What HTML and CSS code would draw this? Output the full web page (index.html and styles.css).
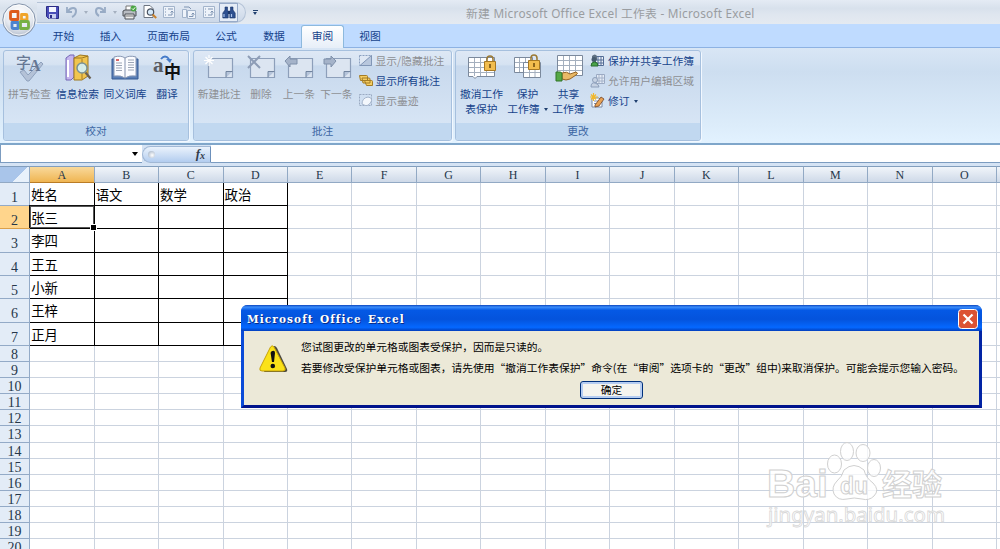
FILE: index.html
```html
<!DOCTYPE html>
<html lang="zh-CN">
<head>
<meta charset="utf-8">
<title>Microsoft Excel</title>
<link rel="stylesheet" href="styles.css">
</head>
<body>
<div class="app">
  <header class="titlebar">
    <div class="qat">
      <span class="slot w19"><svg width="13" height="13" viewBox="0 0 13 13"><path d="M.5.5h12v12h-10l-2-2z" fill="#4a4db8" stroke="#2b2c86"/><path d="M3 1h7v5H3z" fill="#f4f6ff"/><path d="M3 8h7v4.500H3z" fill="#c9cff0"/><path d="M4 9h2v3H4z" fill="#2b2c86"/></svg></span>
      <span class="slot w20"><svg width="12" height="12" viewBox="0 0 12 12"><path d="M1 1v5h5" fill="none" stroke="#98abc5" stroke-width="1.800"/><path d="M2 5C5 1 10 1 10 5c0 3-2 5-4 6" fill="none" stroke="#98abc5" stroke-width="2"/></svg></span>
      <span class="slot w7"><i class="caret pale"></i></span>
      <span class="slot w22"><svg width="12" height="12" viewBox="0 0 12 12"><path d="M11 1v5H6" fill="none" stroke="#98abc5" stroke-width="1.800"/><path d="M10 5C7 1 2 1 2 5c0 3 1 4 3 5" fill="none" stroke="#98abc5" stroke-width="2"/></svg></span>
      <span class="slot w7"><i class="caret pale"></i></span>
      <span class="slot w22"><svg width="15" height="15" viewBox="0 0 15 15"><path d="M4 1h7v5H4z" fill="#fff" stroke="#777"/><path d="M1 6l2-1h9l2 1v5H1z" fill="#b8bcc2" stroke="#4d5157"/><path d="M3 9h9v5H3z" fill="#eee" stroke="#4d5157"/><path d="M4 11h7" stroke="#777"/><circle cx="11.500" cy="3.500" r="3" fill="#49a544"/><path d="M10 3.500l1.200 1.200 2-2.400" stroke="#fff" fill="none"/></svg></span>
      <span class="slot w19"><svg width="14" height="14" viewBox="0 0 14 14"><path d="M1 .5h6l3 3v9H1z" fill="#fff" stroke="#6c7480"/><circle cx="7.500" cy="7" r="3.200" fill="#d4e8f8" stroke="#4a5260" stroke-width="1.200"/><path d="M9.700 9.500l3.500 3.500" stroke="#c9822c" stroke-width="2"/></svg></span>
      <span class="slot w20"><svg width="12" height="12" viewBox="0 0 12 12"><path d="M.5.500h11v11H.5z" fill="#eef3fa" stroke="#a3b4cb"/><path d="M2 3h1M5 3h5M2 6h1M2 9h1M5 9h4V5M7.500 6.500L9 5l1.500 1.500" stroke="#7f94b2" fill="none"/></svg></span>
      <span class="slot w20"><svg width="14" height="13" viewBox="0 0 14 13"><path d="M.5 3.500h4v8h-4zM5.500 4.500h8v8h-8z" fill="#eef3fa" stroke="#a3b4cb"/><path d="M2 1h5l2 2M7 10.500h4V7M9.500 8.500L11 7l1.500 1.500" stroke="#7f94b2" fill="none"/></svg></span>
      <span class="slot w20"><svg width="12" height="12" viewBox="0 0 12 12"><path d="M.5.500h11v11H.5z" fill="#eef3fa" stroke="#a3b4cb"/><path d="M2 3h1M5 3h5M2 6h1M2 9h1M5 9h4V5M7.500 6.500L9 5l1.500 1.500" stroke="#7f94b2" fill="none"/></svg></span>
      <span class="slot w19 active"><svg width="14" height="13" viewBox="0 0 14 13"><path d="M3 1h2.500v3l.7 1v7H.8V7L3 4zM8.500 1H11v3l2.200 3v5H7.800V5l.7-1z" fill="#2d4f8f" stroke="#1d3668" stroke-width=".6"/><path d="M6 5h2v3H6z" fill="#1d3668"/><path d="M2 8v3M9.500 8v3" stroke="#a9c3ec" stroke-width="1.200"/></svg></span>
    </div>
    <span class="customize"><i></i><i class="caret"></i></span>
    <h1>新建 Microsoft Office Excel 工作表 - Microsoft Excel</h1>
    <svg class="office" width="36" height="36" viewBox="0 0 36 36">
      <defs><radialGradient id="orb" cx=".5" cy=".3" r=".75"><stop offset="0" stop-color="#fff"/><stop offset=".6" stop-color="#e4e8ef"/><stop offset="1" stop-color="#a9b4c5"/></radialGradient></defs>
      <circle cx="18" cy="18" r="16.200" fill="url(#orb)" stroke="#8494ab"/>
      <circle cx="18" cy="18" r="15" fill="none" stroke="#fff" stroke-opacity=".8"/>
      <g fill="none" stroke-width="2.800" stroke-linejoin="round">
        <path d="M17 9.500h-6q-1.500 0-1.500 1.500v5q0 1.500 1.500 1.500h6z" stroke="#dd5a1c"/>
        <path d="M20.500 12.500h4.500q1 0 1 1v4.500h-5.500z" stroke="#f0a42a"/>
        <path d="M11 20.500h6v6h-5q-1 0-1-1z" stroke="#4c83cf"/>
        <path d="M19.500 19.500h7q1 0 1 1v5q0 1-1 1h-7z" stroke="#76b043"/>
      </g>
    </svg>
  </header>
  <nav class="tabs">
    <a>开始</a><a>插入</a><a>页面布局</a><a>公式</a><a>数据</a><a class="current">审阅</a><a>视图</a>
  </nav>
  <section class="ribbon">
    <div class="group g1">
      <div class="tools">
        <div class="big off"><svg width="30" height="28" viewBox="0 0 30 28"><path d="M5 18l4-2 4 5L26 8l2 2-14 17h-2z" fill="#b4c2d7" stroke="#8fa1bd"/><text x="1" y="14" class="zi">字</text><text x="14" y="17" class="la">A</text></svg><span>拼写检查</span></div>
        <div class="big"><svg width="30" height="28" viewBox="0 0 30 28"><path d="M3 4l4-3h4v22l-3 3H3z" fill="#c5b5ee" stroke="#7566b5"/><path d="M5 6v17" stroke="#fff" stroke-width="2"/><path d="M11 4l6-3 8 1v20l-6 4h-8z" fill="#f1c54f" stroke="#9e7820"/><path d="M19 5v20" stroke="#a67d22"/><path d="M11 4h8l6-2" fill="none" stroke="#9e7820"/><circle cx="19" cy="14" r="5" fill="#d4f1f4" fill-opacity=".93" stroke="#7b9295" stroke-width="1.500"/><path d="M22.500 18.500l5 6" stroke="#6b6151" stroke-width="2.200"/></svg><span>信息检索</span></div>
        <div class="big"><svg width="30" height="28" viewBox="0 0 30 28"><path d="M2 5h26v20H2z" fill="#597fb8" stroke="#375a93"/><path d="M4 3q7-2 11 1 4-3 11-1v19q-7-1-11 2-4-3-11-2z" fill="#fbfcff" stroke="#8a99b4"/><path d="M15 4v20" stroke="#8190ad"/><path d="M6 6h3" stroke="#c33" stroke-width="1.500"/><path d="M6 9h6M6 11.500h6M6 14h6M6 16.500h6M18 6h6M18 8.500h6M18 11h6M18 13.500h6M18 16h6" stroke="#9ca5b5"/></svg><span>同义词库</span></div>
        <div class="big"><svg width="30" height="28" viewBox="0 0 30 28"><text x="1" y="18" class="aa">a</text><text x="12" y="24" class="zh">中</text><path d="M9 5q4-5 8 0" fill="none" stroke="#467bc9" stroke-width="2"/><path d="M14 5h6l-2 4z" fill="#467bc9"/></svg><span>翻译</span></div>
      </div>
      <footer>校对</footer>
    </div>
    <div class="group g2">
      <div class="tools">
        <div class="big off"><svg width="30" height="28" viewBox="0 0 30 28"><path d="M4.500 4.500h24v19h-24z" class="note"/><path d="M22 23.500v-6h6.500" class="fold"/><path d="M5 1v11M0 6.500h10M1.500 3l7 7M8.500 3l-7 7" stroke="#fff" stroke-width="1.200"/></svg><span>新建批注</span></div>
        <div class="big off"><svg width="30" height="28" viewBox="0 0 30 28"><path d="M4.500 4.500h24v19h-24z" class="note"/><path d="M22 23.500v-6h6.500" class="fold"/><path d="M2 2l12 12M14 2L2 14" stroke="#8e9db6" stroke-width="2"/></svg><span>删除</span></div>
        <div class="big off"><svg width="30" height="28" viewBox="0 0 30 28"><path d="M4.500 4.500h24v19h-24z" class="note"/><path d="M22 23.500v-6h6.500" class="fold"/><path d="M1 7l5-5v3h7v5H6v3z" class="arr"/></svg><span>上一条</span></div>
        <div class="big off"><svg width="30" height="28" viewBox="0 0 30 28"><path d="M4.500 4.500h24v19h-24z" class="note"/><path d="M22 23.500v-6h6.500" class="fold"/><path d="M14 7L9 2v3H2v5h7v3z" class="arr"/></svg><span>下一条</span></div>
        <div class="list">
          <div class="small off"><svg width="14" height="13" viewBox="0 0 14 13"><path d="M.5 1.500h12v10H.5z" fill="#dfe8f4" stroke="#8ba0c0" stroke-dasharray="2 1"/><path d="M12.500 1.500v10H1z" fill="#b8c7dd" stroke="#8196b6"/></svg><span>显示/隐藏批注</span></div>
          <div class="small"><svg width="14" height="13" viewBox="0 0 14 13"><path d="M.5 1.500h7q1 0 1 1v4h-7zM3 4h7q1 0 1 1v4H4zM5.500 6.500h7q1 0 1 1v4h-6z" fill="#f5cd62" stroke="#a47c24"/></svg><span>显示所有批注</span></div>
          <div class="small off"><svg width="14" height="13" viewBox="0 0 14 13"><path d="M.5.500h12v11H.5z" fill="none" stroke="#9aaac2" stroke-dasharray="2 1"/><path d="M3 10q0-6 6-7 5 1 3 5-3 5-7 3z" fill="#f3f7fc" stroke="#a3b3ca"/></svg><span>显示墨迹</span></div>
        </div>
      </div>
      <footer>批注</footer>
    </div>
    <div class="group g3">
      <div class="tools">
        <div class="big two"><svg width="30" height="28" viewBox="0 0 30 28"><path d="M1.500 3.500h26v19H10l-2 2-2-2H1.500z" class="page"/><path d="M2 8.500h25M2 13.500h25M2 18.500h25M7.500 4v18M13.500 4v18M19.500 4v18" class="lines"/><path d="M20 8V5q0-3 3-3t3 3v3" class="shackle"/><path d="M17.500 7.500h11v9h-11z" class="lock"/><path d="M23 10v4" stroke="#6d4a0e" stroke-width="1.500"/></svg><span>撤消工作<br>表保护</span></div>
        <div class="big two"><svg width="30" height="28" viewBox="0 0 30 28"><path d="M1.500 3.500h18v15h-18z" class="page"/><path d="M2 8.500h17M2 13.500h17M6.500 4v14M12.500 4v14" class="lines"/><path d="M10.500 8.500h17v15h-17z" class="page"/><path d="M11 13.500h16M11 18.500h16M16.500 9v14M22 9v14" class="lines"/><path d="M18 7V4q0-3 3-3t3 3v3" class="shackle"/><path d="M15.500 6.500h11v9h-11z" class="lock"/><path d="M21 9v4" stroke="#6d4a0e" stroke-width="1.500"/></svg><span>保护<br><span class="drop">工作簿<i class="caret"></i></span></span></div>
        <div class="big two"><svg width="30" height="28" viewBox="0 0 30 28"><path d="M3.500 1.500h25v20h-25z" class="page"/><path d="M4 6.500h24M4 11.500h24M4 16.500h24M9.500 2v19M15.500 2v19M21.500 2v19" class="lines"/><path d="M8 19q5-2 8 1l6-2q3 1 0 3l-6 4q-4 2-8 0z" fill="#e9b967" stroke="#966423"/><path d="M2 18h4q2 0 2 2v7H2z" fill="#55a846" stroke="#317427"/></svg><span>共享<br>工作簿</span></div>
        <div class="list">
          <div class="small"><svg width="15" height="14" viewBox="0 0 15 14"><path d="M5.500 2.500h8v9h-8z" fill="#eef3fa" stroke="#526c96"/><path d="M8 3v8M11 3v8M6 6h8M6 9h8" stroke="#526c96"/><path d="M2 2q3-3 5 0v4H2z" fill="#5f7184"/><circle cx="4" cy="5.500" r="2.500" fill="#465b70"/><path d="M1 12q0-4 3.500-4T8 12z" fill="#4ba44a" stroke="#286d30"/></svg><span>保护并共享工作簿</span></div>
          <div class="small off"><svg width="15" height="14" viewBox="0 0 15 14"><path d="M6.500.500h8v9h-8z" fill="#e5ecf6" stroke="#9baac3"/><path d="M9 1v8M12 1v8M7 4h7M7 7h7" stroke="#a4b2c9"/><circle cx="5" cy="6" r="2.500" fill="#c6d2e3" stroke="#8d9fba"/><path d="M1 13q0-5 4-4 4 1 4 4z" fill="#c6d2e3" stroke="#8d9fba"/></svg><span>允许用户编辑区域</span></div>
          <div class="small"><svg width="15" height="15" viewBox="0 0 15 15"><path d="M2 5h7l3 3v6H2z" fill="#fff" stroke="#7889a5"/><path d="M4 8h5M4 10.500h3" stroke="#8194b5"/><path d="M5 12L11 4l3 2-5 7-4 1z" fill="#e8a153" stroke="#744526" stroke-width=".8"/><path d="M3.500 0v8M0 4h8M1 1.500l5 5M6 1.500l-5 5" stroke="#f2b82c" stroke-width="1.200"/></svg><span>修订<i class="caret"></i></span></div>
        </div>
      </div>
      <footer>更改</footer>
    </div>
  </section>
  <section class="formula">
    <div class="namebox"><i class="caret"></i></div>
    <div class="fx"><i class="knob"></i><em>f<sub>x</sub></em></div>
    <div class="entry"></div>
  </section>
  <main class="sheet" id="sheet"></main>
</div>

<svg class="watermark" width="190" height="100" viewBox="0 0 190 100">
  <g class="wm">
    <text x="5" y="61" class="bai" textLength="61" lengthAdjust="spacingAndGlyphs">Bai</text>
    <ellipse cx="72.500" cy="28" rx="7" ry="9"/><ellipse cx="85" cy="15.500" rx="6.500" ry="9"/><ellipse cx="101" cy="17" rx="7" ry="8.500"/><ellipse cx="112" cy="32" rx="6.500" ry="8.500"/>
    <path d="M82 34q10-9 20 0 2 8 9 13 7 7 1 13-5 5-12 3-8-2-15 0-9 2-13-5-3-7 3-13 5-4 7-11z"/>
    <text x="78" y="58" class="du" textLength="28" lengthAdjust="spacingAndGlyphs">du</text>
    <text x="120" y="59" class="jy">经验</text>
    <text x="6" y="86" class="url" textLength="177" lengthAdjust="spacingAndGlyphs">jingyan.baidu.com</text>
  </g>
</svg>

<div class="dialog">
  <div class="caption"><b>Microsoft Office Excel</b>
    <svg width="20" height="20" viewBox="0 0 20 20"><rect x=".5" y=".5" width="19" height="19" rx="3" fill="#dc5334" stroke="#fff"/><path d="M5.500 5.500l9 9M14.500 5.500l-9 9" stroke="#fff" stroke-width="2.200"/></svg>
  </div>
  <div class="message">
    <svg width="30" height="30" viewBox="0 0 30 30"><path d="M15 2q2 0 3 2l10 21q1 3-2 3H5z" fill="#4c4a3e"/><path d="M11.500 3q1.500-2.500 3.500 0l11 21q1 3-2 3H3q-3 0-2-3z" fill="#fbe218" stroke="#c7a30a"/><path d="M13.300 7q2.700-1 2.700 2l-1 9h-2l-1.400-9q0-1.600 1.700-2z" fill="#111"/><circle cx="13.800" cy="22" r="2.300" fill="#111"/></svg>
    <div class="copy"><p>您试图更改的单元格或图表受保护，因而是只读的。</p><p>若要修改受保护单元格或图表，请先使用“撤消工作表保护”命令(在“审阅”选项卡的“更改”组中)来取消保护。可能会提示您输入密码。</p></div>
  </div>
  <button class="ok">确定</button>
</div>
<script src="sheet.js"></script>
</body>
</html>
```
FILE: styles.css
```css
* { box-sizing: border-box; }
body { margin: 0; width: 1000px; height: 549px; overflow: hidden; background: #fff; font-family: "Noto Sans CJK SC", sans-serif; font-size: 10.75px; color: #15428b; }
.app { display: flex; flex-direction: column; height: 549px; overflow: hidden; }
.titlebar { position: relative; flex: none; display: flex; align-items: center; height: 24px; padding-left: 37px; background: linear-gradient(#e4ebf4, #d8e1ec 35%, #dfe6ef 60%, #e4eaf1); }
.titlebar h1 { margin: 1px 0 0 204px; font: 11.8px/22px "Noto Sans", "Noto Sans CJK SC", sans-serif; letter-spacing: .24px; color: #9a9da1; white-space: nowrap; }
.office { position: absolute; left: 1px; top: 2px; }
.qat { display: flex; align-items: center; width: 209px; height: 21px; padding-left: 6px; border: 1px solid #b4c3d7; border-left: 0; border-radius: 0 11px 11px 0; background: linear-gradient(#e3eaf4, #ccd8e8); }
.slot { display: flex; align-items: center; justify-content: center; height: 19px; }
.w7 { width: 7px; } .w19 { width: 19px; } .w20 { width: 20px; } .w22 { width: 22px; }
.active { border: 1px solid #98abc9; background: #e6edf7; }
.caret { display: inline-block; width: 0; height: 0; border: 2.5px solid transparent; border-top: 3px solid #20406f; border-bottom: 0; }
.caret.pale { border-top-color: #a5b0c0; }
.customize { display: flex; flex-direction: column; align-items: center; gap: 1px; width: 16px; padding-left: 2px; }
.customize i:first-child { width: 5px; height: 1px; background: #20406f; }
.tabs { flex: none; display: grid; grid-template-columns: 43px 51px 65px 50px 46px 43px 54px; height: 24px; padding-left: 42px; background: #bfdbff; line-height: 23.5px; text-align: center; border-bottom: 1px solid #8db2e3; }
.current { height: 24px; margin: 1px 0 0 4px; width: 43px; border: 1px solid #8db9dd; border-bottom: 0; border-radius: 3px 3px 0 0; background: linear-gradient(#fff, #e6eef8); line-height: 20.5px; }
.tabs a:last-child { padding-left: 6px; }
.ribbon { flex: none; display: flex; height: 97px; padding: 2px 3px; background: linear-gradient(#d9e6f5, #cddef0 25%, #dcecfa 80%, #e2f2ff); border-bottom: 2px solid #7fa6ca; }
.group { display: flex; flex-direction: column; flex: none; height: 91px; border: 1px solid #a6c0de; border-radius: 3px; background: linear-gradient(#dee8f5, #d6e3f2 15%, #c8d9ed 17%, #dbe8f7); box-shadow: 1px 1px 0 #f2f8ff; overflow: hidden; }
.g1 { width: 186px; } .g2 { width: 259px; margin-left: 4px; } .g3 { width: 246px; margin-left: 3px; }
.group footer { height: 17px; line-height: 16px; text-align: center; color: #3c66a3; background: #c1d8f0; }
.tools { display: grid; height: 72px; }
.g1 .tools { grid-template-columns: 48px 48px 47px 37px; padding-left: 1.5px; }
.g2 .tools { grid-template-columns: 44.5px 39px 37px 38px 1fr; padding-left: 3px; }
.g3 .tools { grid-template-columns: 47px 45px 37px 1fr; padding-left: 2px; }
.big { display: flex; flex-direction: column; align-items: center; padding-top: 3px; color: #15428b; line-height: 14.5px; text-align: center; white-space: nowrap; }
.big > svg { overflow: visible; }
.big > span { margin-top: 5px; }
.drop { margin-right: -7px; margin-left: -7px; }
.drop .caret { margin: 0 0 2px 4px; }
.off, .big.off { color: #8d8f93; }
.list { display: flex; flex-direction: column; padding: 0 0 0 3px; }
.small { display: flex; align-items: center; height: 19.7px; gap: 3px; white-space: nowrap; }
.small .caret { margin: 0 0 2px 4px; }
.note { fill: #dce5f1; stroke: #8d9fba; stroke-width: 1.2; }
.fold { fill: #b5c4da; stroke: #71849f; }
.arr { fill: #a5b3c9; stroke: #7f90aa; }
.page { fill: #fff; stroke: #7b899c; }
.lines { fill: none; stroke: #a4afbe; }
.shackle { fill: none; stroke: #9c7a36; stroke-width: 1.6; }
.lock { fill: #f2bd4e; stroke: #a77822; }
.zi { font-size: 15px; font-weight: 500; fill: #667894; }
.la { font: bold 16px "Liberation Serif", serif; fill: #667894; }
.aa { font: bold 21px "Liberation Serif", serif; fill: #5a5c62; }
.zh { font-size: 17px; font-weight: 700; fill: #111; }
.formula { flex: none; display: flex; height: 21px; padding-bottom: 3px; background: #d5e3f4; }
.namebox { display: flex; justify-content: flex-end; align-items: center; width: 142px; border: 1px solid #7c9cc0; border-top: 0; border-right: 0; background: #fff; padding-right: 4px; }
.namebox .caret { border-width: 4px 3.5px 0; border-top-color: #000; }
.fx { display: flex; align-items: center; justify-content: space-between; width: 69px; margin: 1px 0 0; padding: 0 5px 0 5px; border: 1px solid #a1b8d5; border-right: 1px solid #6c90bb; border-radius: 9px 0 0 9px; background: linear-gradient(#eaf2fc, #b3cdef); }
.knob { width: 7px; height: 7px; border-radius: 50%; background: radial-gradient(circle at 60% 60%, #fff, #98a9bf); }
.fx em { font: italic bold 13px/14px "Liberation Serif", serif; color: #333d4c; }
.fx sub { font-size: 10px; vertical-align: -1px; }
.entry { flex: 1; border-bottom: 1px solid #7c9cc0; background: #fff; }
.sheet { flex: 1; min-height: 0; font-family: "Liberation Serif", "Noto Sans CJK SC", serif; }
.row { display: grid; grid-template-columns: 30.2px repeat(16, 64.46px); height: 16.11px; }
.row.tall { height: 23.3px; }
.row.head { height: 16.8px; }
.row > * { border-right: 1px solid #cbd3df; border-bottom: 1px solid #cbd3df; min-height: 0; }
.row.head > * { font-size: 12px; line-height: 17px; text-align: center; color: #26374a; border-color: #92a9c4; border-top: 1px solid #829ebd; background: linear-gradient(#f1f5fa, #ced9e8); overflow: hidden; }
.row.head > .corner { background: linear-gradient(135deg, #a9c5ea 62%, #e8f1fb 63%); }
.row > .num { height: 100%; padding-top: 1px; font-size: 14px; line-height: 15px; text-align: center; color: #26374a; background: #e3ecf7; border-color: #93aac7; }
.row.tall > .num { padding-top: 8px; line-height: 14px; }
.row > .filled { padding: 2px 0 0 1px; font-size: 13.4px; line-height: 21px; height: 100%; color: #000; border-color: #000; white-space: nowrap; }
.row.head > .picked { background: linear-gradient(#f9d99b, #efb552); border-bottom-color: #ba7c25; }
.row > .num.picked { background: #ffd58c; border-color: #dba04a; }
.row > .cursor { position: relative; box-shadow: inset 0 0 0 1px #555, -1px -1px 0 #111; }
.cursor::after { content: ""; position: absolute; right: -3px; bottom: -3px; width: 5px; height: 5px; background: #000; border: 1px solid #fff; }
.dialog { position: absolute; left: 241px; top: 305px; width: 741px; height: 103px; border: 3px solid #0a4bd8; border-top: 0; border-right-color: #0224a5; border-bottom-color: #00138c; border-radius: 7px 7px 0 0; background: #ece9d8; color: #000; }
.caption { display: flex; align-items: center; justify-content: space-between; height: 26px; margin: 0 -3px; padding: 2px 4px 0 6px; border-radius: 6px 6px 0 0; background: linear-gradient(#0b45bd, #3b8dfb 8%, #0559e5 20%, #0453dc 55%, #0468ff 86%, #023fbd); }
.caption b { font: bold 10.5px "DejaVu Serif", serif; letter-spacing: 1.1px; word-spacing: 1.5px; color: #fff; text-shadow: 1px 1px 0 #0a2b86; white-space: pre; }
.message { display: flex; height: 50px; padding: 12px 0 0 15px; }
.message svg { flex: none; margin-top: 1px; }
.copy { padding-left: 12px; white-space: nowrap; margin-top: -4px; }
.copy p { margin: 0 0 5px; line-height: 16px; }
.ok { display: block; width: 63px; height: 18px; margin: 0 0 0 336px; padding: 0; border: 1px solid #00307c; border-radius: 3px; box-shadow: inset 0 0 0 2px #b6cdf2; background: #f5f4ef; font: 10.75px/14px "Noto Sans CJK SC", sans-serif; color: #000; }
.watermark { position: absolute; left: 762px; top: 436px; }
.wm > * { fill: #fff; fill-opacity: .75; stroke: #d0d0d0; stroke-width: 1; }
.bai { font: bold 38px "Liberation Sans", sans-serif; }
.du { font: bold 23px "Liberation Sans", sans-serif; }
.jy { font: bold 30px "Noto Sans CJK SC", sans-serif; }
.wm > .url { font: 20px "Noto Sans", sans-serif; stroke: #d8d8d8; stroke-width: .8; }
```
FILE: sheet.js
```javascript
const names = ["姓名", "张三", "李四", "王五", "小新", "王梓", "正月"];
const subjects = ["语文", "数学", "政治"];
const sheet = document.getElementById("sheet");

function cell(row, text, classes) {
  const node = document.createElement("div");
  node.textContent = text;
  node.className = classes || "";
  row.append(node);
}

function addRow(classes) {
  const row = document.createElement("div");
  row.className = "row " + classes;
  sheet.append(row);
  return row;
}

const head = addRow("head");
cell(head, "", "corner");
for (const letter of "ABCDEFGHIJKLMNOP") {
  const shown = letter === "P" ? "" : letter;
  cell(head, shown, letter === "A" ? "picked" : "");
}

for (let r = 1; r <= 20; r++) {
  const tall = r <= 7;
  const row = addRow(tall ? "tall" : "");
  cell(row, r, r === 2 ? "num picked" : "num");
  for (let c = 0; c < 16; c++) {
    const filled = tall && c < 4;
    let text = "";
    if (filled && c === 0) text = names[r - 1];
    if (filled && c > 0 && r === 1) text = subjects[c - 1];
    cell(row, text, filled ? (r === 2 && c === 0 ? "filled cursor" : "filled") : "");
  }
}
```
